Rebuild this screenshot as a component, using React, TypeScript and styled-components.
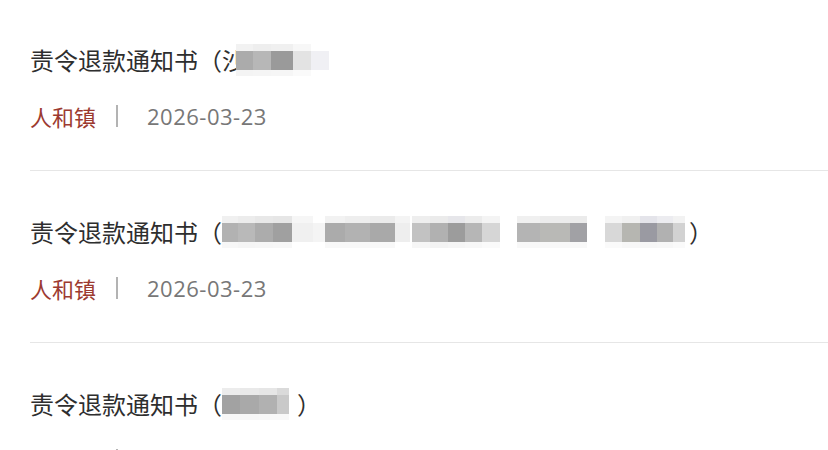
import React from "react";
import styled, { createGlobalStyle } from "styled-components";

const Global = createGlobalStyle`
  html, body { margin: 0; padding: 0; background: #fff; }
  body { font-family: "Noto Sans CJK SC", "Noto Sans", sans-serif; overflow: hidden; }
`;

const List = styled.ul`
  list-style: none;
  margin: -2px 0 0 30px;
  padding: 0;
`;

const Item = styled.li`
  border-top: 1px solid #e6e6e6;
  padding: 45px 0 39px 0;
`;

const Title = styled.div`
  display: flex;
  align-items: center;
  height: 32px;
  font-size: 24px;
  line-height: 32px;
  color: #2e2e2e;
  white-space: nowrap;
`;

const Clipped = styled.span<{ $w: number }>`
  display: inline-block;
  width: ${(p) => p.$w}px;
  overflow: hidden;
  vertical-align: top;
`;

const Mosaic = styled.span`
  display: inline-flex;
  height: 32px;
`;

const Column = styled.span<{ $w: number }>`
  display: flex;
  flex-direction: column;
  width: ${(p) => p.$w}px;
`;

const Cell = styled.span<{ $h: number; $c: string }>`
  height: ${(p) => p.$h}px;
  background: ${(p) => p.$c};
  flex: none;
`;

const Gap = styled.span<{ $w: number }>`
  display: inline-block;
  width: ${(p) => p.$w}px;
`;

const Meta = styled.div`
  display: flex;
  align-items: center;
  height: 30px;
  margin-top: 25px;
  white-space: nowrap;
`;

const Town = styled.span`
  font-size: 22px;
  color: #9c3a30;
`;

const Sep = styled.span`
  width: 2px;
  height: 22px;
  background: #b3b3b3;
  margin: 0 29px 0 20px;
`;

const DateText = styled.span`
  font-family: "Open Sans", "Noto Sans", sans-serif;
  font-size: 22px;
  color: #777;
  letter-spacing: 0.5px;
`;

type Col = { w: number; t: string; m: string; b: string };

const MosaicBlock = ({ cols }: { cols: Col[] }) => (
  <Mosaic>
    {cols.map((c, i) => (
      <Column key={i} $w={c.w}>
        <Cell $h={7} $c={c.t} />
        <Cell $h={19} $c={c.m} />
        <Cell $h={6} $c={c.b} />
      </Column>
    ))}
  </Mosaic>
);

const W = "#ffffff";

const row1: Col[] = [
  { w: 17, t: "#f2f2f2", m: "#ababab", b: "#f4f4f4" },
  { w: 18, t: "#eeeeee", m: "#b7b7b7", b: "#f5f5f5" },
  { w: 22, t: "#f0f0f0", m: "#9a9a9a", b: "#f6f6f6" },
  { w: 18, t: "#f7f7f7", m: "#e3e3e3", b: "#fafafa" },
  { w: 18, t: W, m: "#f0f0f4", b: W },
];

const row2: Col[] = [
  { w: 16, t: "#f0f0f0", m: "#b2b2b2", b: "#f7f7f7" },
  { w: 17, t: "#ececec", m: "#b9b9b9", b: "#f5f5f5" },
  { w: 18, t: "#e8e8e8", m: "#acacac", b: "#f6f6f6" },
  { w: 19, t: "#e6e6e6", m: "#a0a0a0", b: "#f7f7f7" },
  { w: 21, t: "#f6f6f6", m: "#f0f0f0", b: W },
  { w: 12, t: W, m: "#f4f4f4", b: W },
  { w: 20, t: "#f2f2f2", m: "#ababab", b: "#f8f8f8" },
  { w: 25, t: "#eeeeee", m: "#b2b2b2", b: "#f8f8f8" },
  { w: 25, t: "#ebebeb", m: "#a9a9a9", b: "#f8f8f8" },
  { w: 15, t: "#f4f4f4", m: "#eeeeee", b: W },
  { w: 2, t: W, m: W, b: W },
  { w: 18, t: "#eeeeee", m: "#c2c2c2", b: "#f6f6f6" },
  { w: 18, t: "#ebebeb", m: "#b1b1b1", b: "#f3f3f3" },
  { w: 17, t: "#e6e6ea", m: "#9c9c9c", b: "#f5f5f5" },
  { w: 17, t: "#ececec", m: "#b6b6b6", b: "#f7f7f7" },
  { w: 18, t: "#f4f4f4", m: "#d6d6d6", b: "#fafafa" },
  { w: 17, t: W, m: W, b: W },
  { w: 23, t: "#f0f0f0", m: "#b4b4b4", b: "#f8f8f8" },
  { w: 30, t: "#ececec", m: "#b9b9b6", b: "#f8f8f8" },
  { w: 17, t: "#ebebeb", m: "#a1a1a5", b: "#f8f8f8" },
  { w: 18, t: W, m: W, b: W },
  { w: 17, t: "#f4f4f4", m: "#d8d8d8", b: "#fafafa" },
  { w: 18, t: "#f0f0f0", m: "#b6b6b1", b: "#f7f7f7" },
  { w: 17, t: "#e4e4ea", m: "#9a9aa2", b: "#f6f6f6" },
  { w: 16, t: "#ececf0", m: "#b1b1b1", b: "#f7f7f7" },
  { w: 12, t: "#f2f2f2", m: "#d2d2d2", b: "#fafafa" },
];

const row3: Col[] = [
  { w: 18, t: "#ececec", m: "#a2a2a2", b: "#f7f7f7" },
  { w: 19, t: "#e9e9e9", m: "#a9a9a9", b: "#f7f7f7" },
  { w: 18, t: "#e6e6e6", m: "#b1b1b1", b: "#f8f8f8" },
  { w: 12, t: "#dadada", m: "#c9c9c9", b: "#f8f8f8" },
];

const MetaRow = () => (
  <Meta>
    <Town>人和镇</Town>
    <Sep />
    <DateText>2026-03-23</DateText>
  </Meta>
);

export default function App() {
  return (
    <>
      <Global />
      <List>
        <Item>
          <Title>
            责令退款通知书（<Clipped $w={14}>沙</Clipped>
            <MosaicBlock cols={row1} />
          </Title>
          <MetaRow />
        </Item>
        <Item>
          <Title>
            责令退款通知书（<MosaicBlock cols={row2} />
            <Gap $w={4} />）
          </Title>
          <MetaRow />
        </Item>
        <Item>
          <Title>
            责令退款通知书（<MosaicBlock cols={row3} />
            <Gap $w={8} />）
          </Title>
          <MetaRow />
        </Item>
      </List>
    </>
  );
}
